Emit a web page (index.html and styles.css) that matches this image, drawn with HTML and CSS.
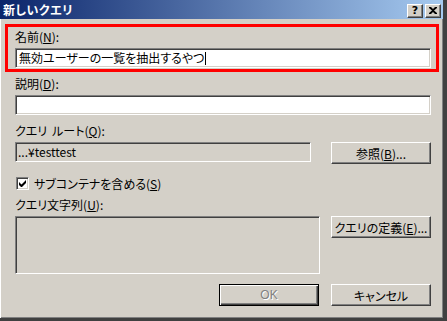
FILE: index.html
```html
<!DOCTYPE html>
<html lang="ja">
<head>
<meta charset="utf-8">
<link rel="stylesheet" href="styles.css">
</head>
<body>
<div class="window">
  <div class="titlebar">
    <span class="title">新しいクエリ</span>
    <div class="tbtns">
      <span class="tbtn help">?</span>
      <span class="tbtn"><svg width="8" height="7" viewBox="0 0 8 7"><path d="M0 0h2l2 2 2-2h2v1L5 3.5 8 6v1H6L4 5 2 7H0V6l3-2.5L0 1z" fill="#000"/></svg></span>
    </div>
  </div>
  <div class="client">
    <div class="highlight">
      <div class="label">名前(<u>N</u>):</div>
      <div class="field white">無効ユーザーの一覧を抽出するやつ<span class="caret"></span></div>
    </div>
    <div class="section">
      <div class="label l-desc">説明(<u>D</u>):</div>
      <div class="field white"></div>
      <div class="label l-root">クエリ<span class="sp">ルート</span>(<u>Q</u>):</div>
      <div class="row">
        <div class="field ro">...¥testtest</div>
        <div class="btn">参照(<u>B</u>)...</div>
      </div>
      <div class="check">
        <span class="box"><svg width="9" height="9" viewBox="0 0 9 9"><path d="M1 3v3l2 2h1l4-4V1L3.5 5.5z" fill="#000"/></svg></span>
        <span>サブコンテナを含める(<u>S</u>)</span>
      </div>
      <div class="label l-str">クエリ文字列(<u>U</u>):</div>
      <div class="row">
        <div class="area"></div>
        <div class="btn">クエリの定義(<u>E</u>)...</div>
      </div>
      <div class="actions">
        <div class="btn default"><span class="disabled">OK</span></div>
        <div class="btn">キャンセル</div>
      </div>
    </div>
  </div>
</div>
</body>
</html>
```

FILE: styles.css
```css
* { box-sizing: border-box; }
html, body { margin: 0; padding: 0; }
body {
  width: 447px;
  height: 321px;
  background: #404040;
  overflow: hidden;
  font-family: "Noto Sans CJK JP", sans-serif;
  font-size: 12px;
  font-feature-settings: "palt";
  color: #000;
}
.window {
  width: 444px;
  height: 319px;
  background: #d4d0c8;
  border-bottom: 1px solid #404040;
  border-right: 1px solid #404040;
  box-shadow: inset -1px -1px 0 #808080;
  display: flex;
  flex-direction: column;
}
.titlebar {
  height: 19px;
  background: linear-gradient(to right, #0a246a, #a6caf0);
  display: flex;
  align-items: center;
  justify-content: space-between;
  padding: 0 2px 0 3px;
  flex: none;
}
.title {
  color: #fff;
  font-weight: bold;
  font-size: 12px;
  line-height: 19px;
  letter-spacing: 0.5px;
}
.tbtns { display: flex; gap: 2px; margin-top: 2px; }
.tbtn {
  width: 16px;
  height: 14px;
  background: #d4d0c8;
  border-top: 1px solid #fff;
  border-left: 1px solid #fff;
  border-right: 1px solid #404040;
  border-bottom: 1px solid #404040;
  box-shadow: inset -1px -1px 0 #808080;
  display: flex;
  align-items: center;
  justify-content: center;
  font-family: "DejaVu Sans", sans-serif;
  font-weight: bold;
  font-size: 11px;
  line-height: 12px;
}
.client {
  flex: 1;
  box-shadow: inset 1px 0 0 #fff;
  padding-top: 5px;
}
.highlight {
  margin-left: 5px;
  width: 434px;
  border: 3px solid #ff0000;
  padding: 0 5px 1px 7px;
}
.label {
  height: 20px;
  line-height: 20px;
  margin-bottom: 1px;
  white-space: nowrap;
}
.sp { margin-left: 5px; }
.field {
  height: 20px;
  border-top: 1px solid #808080;
  border-left: 1px solid #808080;
  border-right: 1px solid #fff;
  border-bottom: 1px solid #fff;
  box-shadow: inset 1px 1px 0 #404040, inset -1px -1px 0 #d4d0c8;
  padding: 0 3px;
  line-height: 18px;
  white-space: nowrap;
  display: flex;
  align-items: center;
}
.white { background: #fff; width: 416px; }
.caret {
  display: inline-block;
  width: 1px;
  height: 13px;
  background: #000;
  margin-left: 1px;
}
.section { padding-left: 15px; }
.l-desc { margin-top: 2px; }
.l-root { margin-top: 6px; }
.l-str { margin-top: 5px; }
.row {
  display: flex;
  align-items: flex-start;
}
.ro { width: 296px; background: #d4d0c8; padding-left: 2px; }
.btn {
  width: 100px;
  height: 22px;
  background: #d4d0c8;
  border-top: 1px solid #fff;
  border-left: 1px solid #fff;
  border-right: 1px solid #404040;
  border-bottom: 1px solid #404040;
  box-shadow: inset -1px -1px 0 #808080;
  display: flex;
  align-items: center;
  justify-content: center;
  white-space: nowrap;
  margin-left: auto;
  margin-right: 12px;
  flex: none;
}
.check {
  display: flex;
  align-items: center;
  gap: 5px;
  margin-top: 13px;
  margin-left: 1px;
  height: 13px;
}
.box {
  width: 13px;
  height: 13px;
  background: #fff;
  border-top: 1px solid #808080;
  border-left: 1px solid #808080;
  border-right: 1px solid #fff;
  border-bottom: 1px solid #fff;
  box-shadow: inset 1px 1px 0 #404040, inset -1px -1px 0 #d4d0c8;
  display: flex;
  align-items: center;
  justify-content: center;
}
.area {
  width: 305px;
  height: 58px;
  background: #d4d0c8;
  border-top: 1px solid #808080;
  border-left: 1px solid #808080;
  border-right: 1px solid #fff;
  border-bottom: 1px solid #fff;
  box-shadow: inset 1px 1px 0 #404040, inset -1px -1px 0 #d4d0c8;
}
.actions {
  display: flex;
  justify-content: flex-end;
  gap: 12px;
  margin-top: 10px;
  padding-right: 12px;
}
.actions .btn { margin: 0; }
.btn.default {
  border: 1px solid #000;
  box-shadow: inset 1px 1px 0 #fff, inset -1px -1px 0 #404040, inset -2px -2px 0 #808080;
}
.disabled {
  color: #808080;
  text-shadow: 1px 1px 0 #fff;
  font-family: "Liberation Sans", sans-serif;
}
```
